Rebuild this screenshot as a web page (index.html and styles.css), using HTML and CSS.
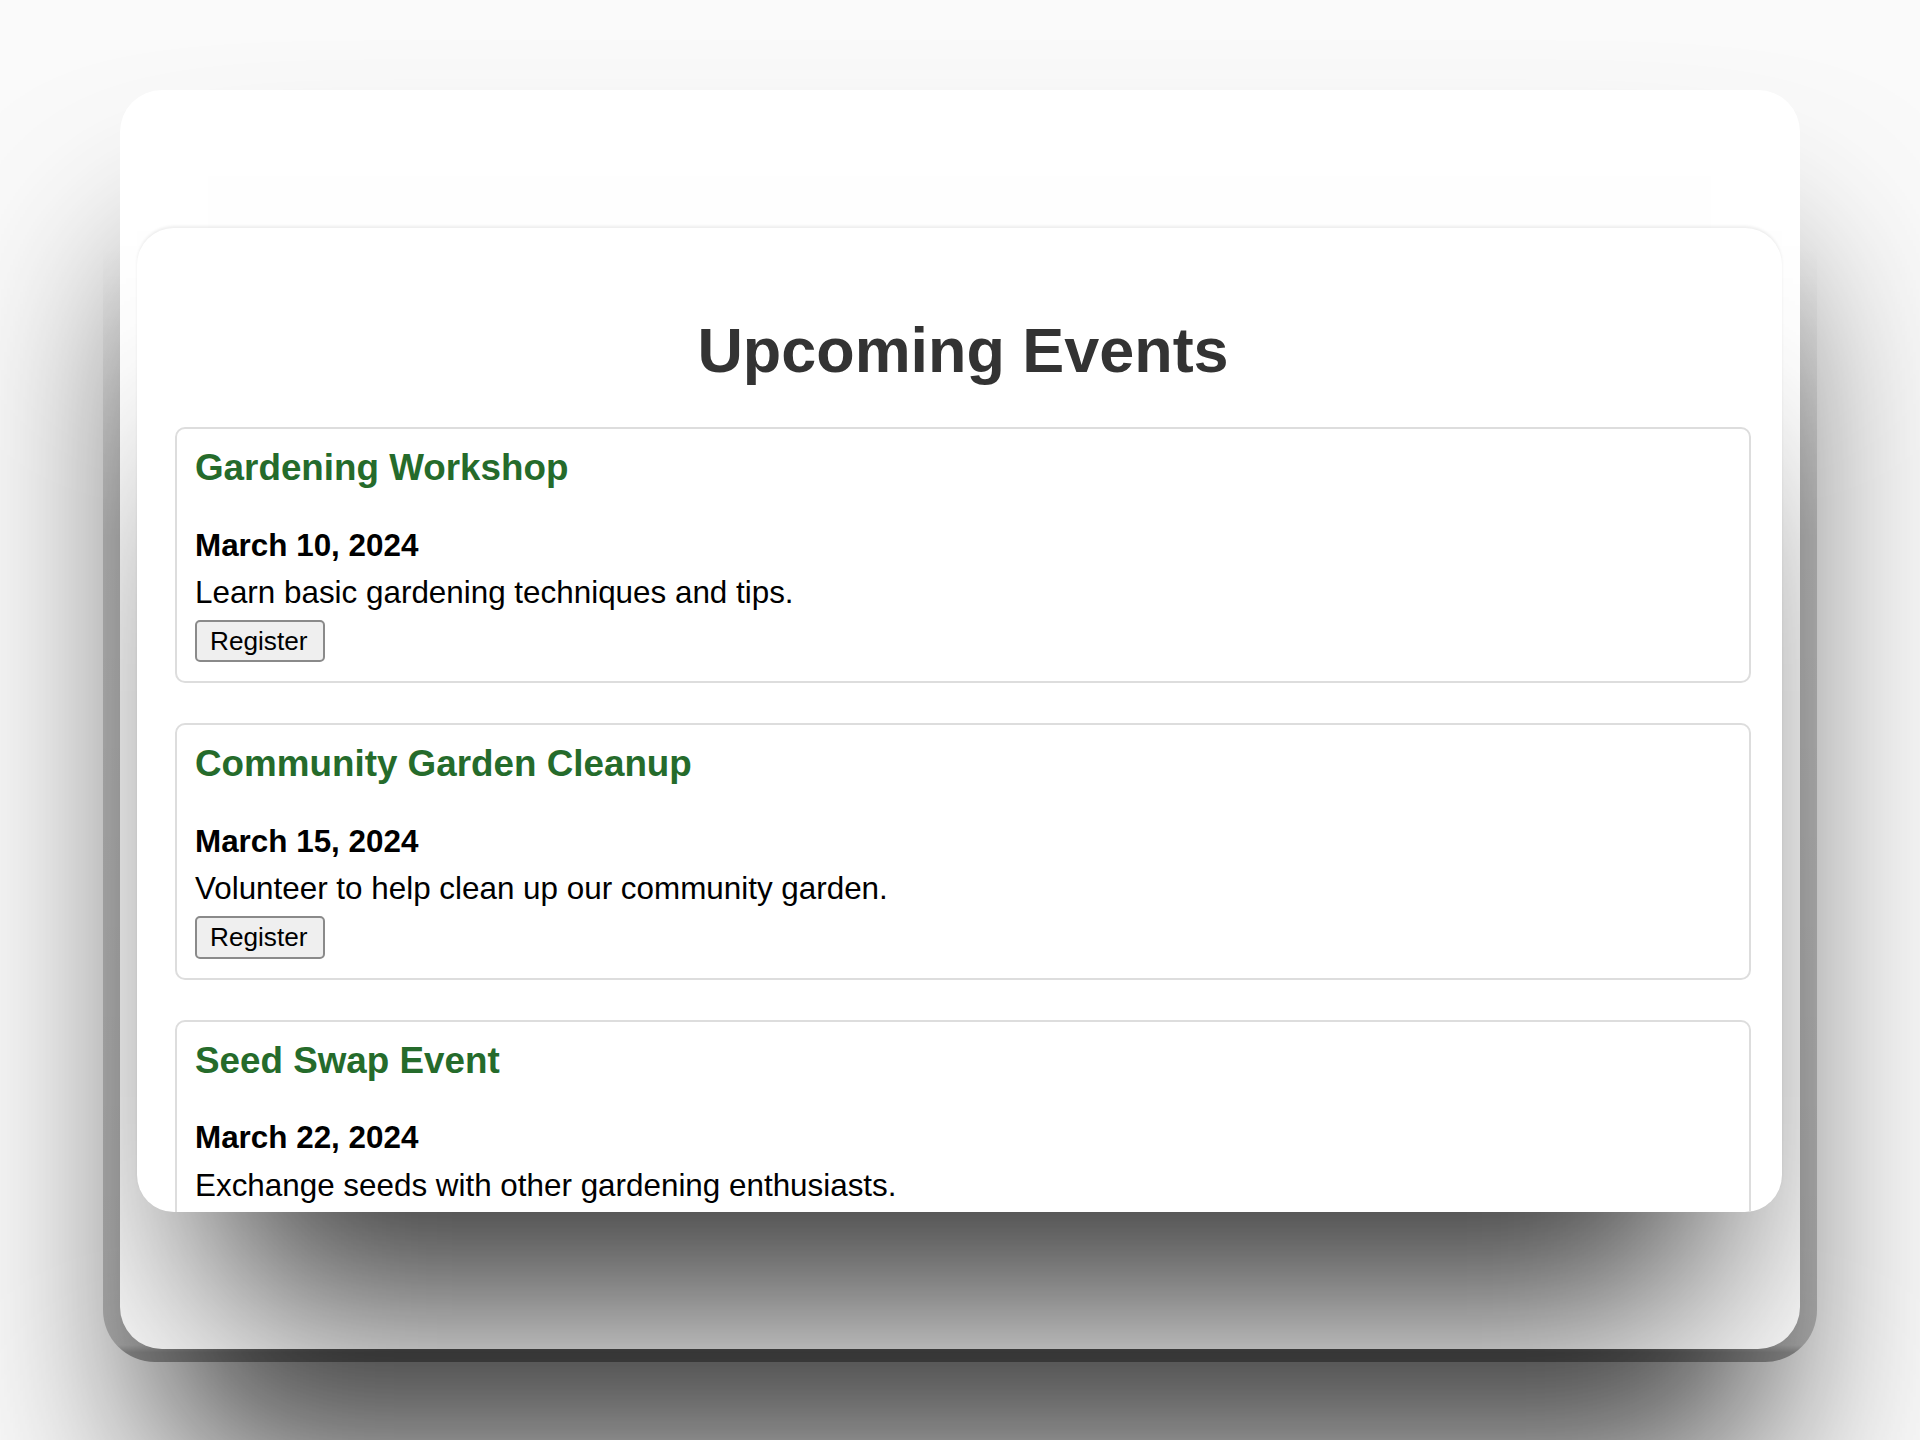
FILE: index.html
```html
<!DOCTYPE html>
<html lang="en">
<head>
<meta charset="utf-8">
<title>Upcoming Events</title>
<link rel="stylesheet" href="styles.css">
</head>
<body>
  <div class="stage">
    <div class="device">
      <div class="frame">
        <main class="viewport">
          <h1 class="page-title">Upcoming Events</h1>
          <section class="event-list">
            <article class="event-card">
              <h3 class="event-name">Gardening Workshop</h3>
              <p class="event-date">March 10, 2024</p>
              <p class="event-desc">Learn basic gardening techniques and tips.</p>
              <button class="btn" type="button">Register</button>
            </article>
            <article class="event-card">
              <h3 class="event-name">Community Garden Cleanup</h3>
              <p class="event-date">March 15, 2024</p>
              <p class="event-desc">Volunteer to help clean up our community garden.</p>
              <button class="btn" type="button">Register</button>
            </article>
            <article class="event-card">
              <h3 class="event-name">Seed Swap Event</h3>
              <p class="event-date">March 22, 2024</p>
              <p class="event-desc">Exchange seeds with other gardening enthusiasts.</p>
              <button class="btn" type="button">Register</button>
            </article>
          </section>
        </main>
      </div>
    </div>
  </div>
</body>
</html>
```

FILE: styles.css
```css
html {
  background: #fafafa;
}

body {
  margin: 0;
  height: 1440px;
  overflow: hidden;
  font-family: "Liberation Sans", Arial, sans-serif;
  color: #000;
}

.stage {
  padding-top: 90px;
  display: flex;
  justify-content: center;
}

.device {
  position: relative;
  width: 1680px;
}

.device::before {
  content: "";
  position: absolute;
  left: -17px;
  right: -17px;
  top: 60px;
  bottom: -13px;
  border-radius: 52px;
  background: linear-gradient(to bottom,
    rgba(0, 0, 0, 0) 0%,
    rgba(0, 0, 0, 0) 8%,
    rgba(0, 0, 0, 0.06) 18%,
    rgba(0, 0, 0, 0.17) 32%,
    rgba(0, 0, 0, 0.2) 90%,
    rgba(0, 0, 0, 0.22) 98.6%,
    rgba(0, 0, 0, 0.36) 99.2%);
  z-index: -1;
}

.frame {
  position: relative;
  height: 1259px;
  background: #fff;
  border-radius: 42px;
  overflow: hidden;
  box-shadow: 0 155px 200px -35px rgba(0, 0, 0, 0.75);
}

.viewport {
  display: block;
  box-sizing: border-box;
  margin: 138px 18px 0 17px;
  height: 984px;
  padding: 44px 31px 0 38px;
  background: #fff;
  border-radius: 37px;
  overflow: hidden;
  box-shadow: 0 174px 200px -72px rgba(0, 0, 0, 0.78),
              0 -2px 3px rgba(0, 0, 0, 0.07);
}

.page-title {
  margin: 42px 0 41px;
  font-size: 62.9px;
  line-height: 72px;
  font-weight: bold;
  text-align: center;
  color: #333;
}

.event-card {
  border: 2px solid #ddd;
  border-radius: 10px;
  padding: 18px 18px 19px;
  margin-bottom: 40px;
}

.event-name {
  margin: 0 0 38.5px;
  font-size: 36.8px;
  line-height: 42px;
  font-weight: bold;
  color: #256b2b;
}

.event-date {
  margin: 0 0 11.3px;
  font-size: 31.4px;
  line-height: 36px;
  font-weight: bold;
}

.event-desc {
  margin: 0 0 8.9px;
  font-size: 31.4px;
  line-height: 36px;
}

.btn {
  display: block;
  margin: 0;
  height: 42.7px;
  padding: 0 15px 0 13px;
  font-family: "Liberation Sans", Arial, sans-serif;
  font-size: 26.2px;
  color: #000;
  background: #efefef;
  border: 2px solid #8a8a8a;
  border-radius: 5px;
}
```
